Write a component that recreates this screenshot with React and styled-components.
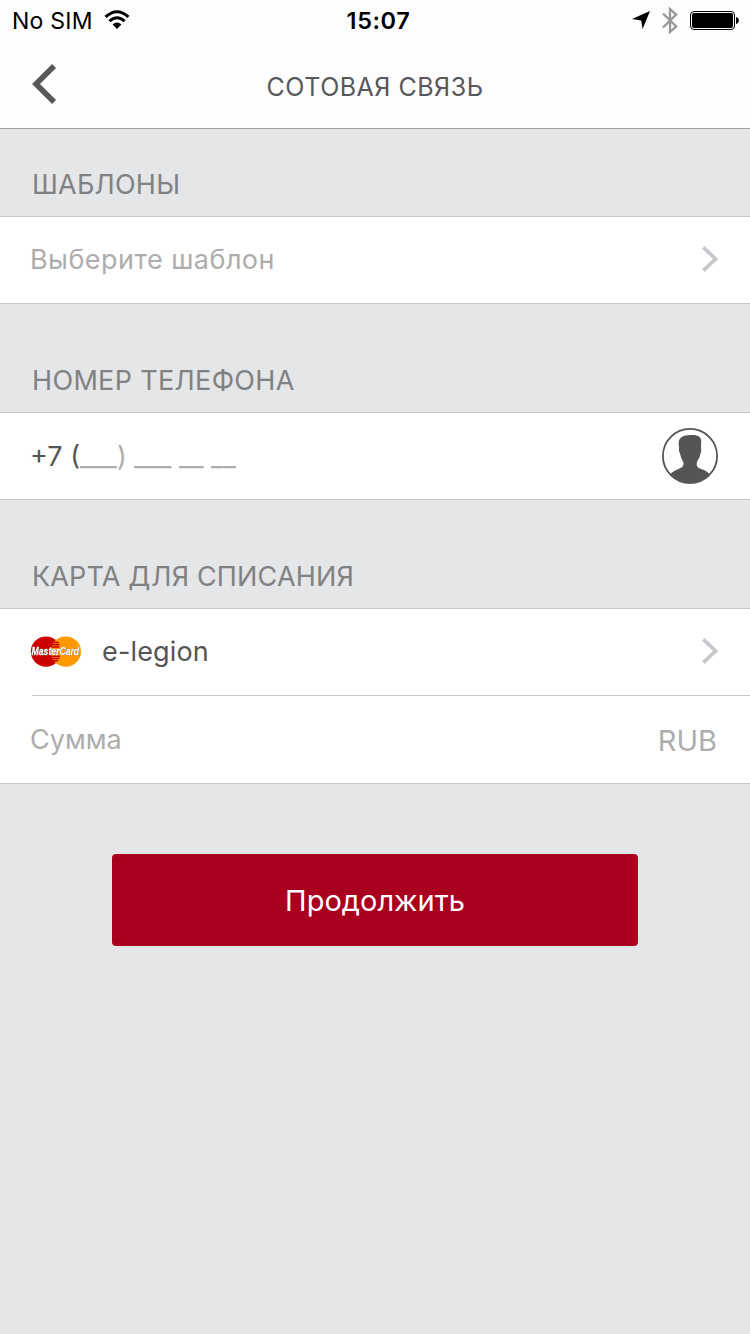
import React from "react";
import styled, { createGlobalStyle } from "styled-components";

const GlobalStyle = createGlobalStyle`
  * { box-sizing: border-box; }
  body { margin: 0; background: #e5e6e8; font-family: Inter, "Liberation Sans", sans-serif; }
  svg { display: block; flex: none; overflow: visible; }
`;

const Screen = styled.div`
  width: 750px;
  min-height: 1334px;
  background: #e5e6e8;
  display: flex;
  flex-direction: column;
`;

const Header = styled.header`
  height: 129px;
  background: #fdfdfd;
  border-bottom: 1px solid #a3a4a6;
`;

const StatusBar = styled.div`
  height: 40px;
  padding: 0 11px 0 12px;
  display: grid;
  grid-template-columns: 1fr auto 1fr;
  align-items: center;
  color: #000;
`;

const StatusGroup = styled.div`
  display: flex;
  align-items: center;
  justify-content: ${(p) => (p.$end ? "flex-end" : "flex-start")};
`;

const NavBar = styled.div`
  height: 88px;
  padding: 0 32px;
  display: grid;
  grid-template-columns: 1fr auto 1fr;
  align-items: center;
`;

const BackButton = styled.button`
  justify-self: start;
  padding: 0;
  margin-bottom: 1px;
  border: 0;
  background: none;
`;

const Text = styled.span`
  padding-top: ${(p) => p.$drop || 0}px;
  color: ${(p) => p.$color || "inherit"};
  font-size: ${(p) => p.$size || 27}px;
  font-weight: ${(p) => p.$weight || 390};
  letter-spacing: ${(p) => p.$track || 0}px;
  line-height: 32px;
  white-space: pre;
`;

const Clock = styled(Text)`
  padding-left: 6px;
`;

const Title = styled.h1`
  margin: 6px 0 0;
  font-size: 25px;
  font-weight: 390;
  letter-spacing: 0.5px;
  line-height: 40px;
  color: #58585a;
`;

const SectionLabel = styled.h2`
  margin: 0;
  height: ${(p) => (p.$first ? 87 : 108)}px;
  padding: 0 32px 11px;
  display: flex;
  align-items: flex-end;
  font-size: 27px;
  font-weight: 385;
  line-height: 40px;
  letter-spacing: ${(p) => p.$track || 0}px;
  color: #808183;
`;

const Group = styled.div`
  background: #fff;
  border-top: 1px solid #c8c7cc;
  border-bottom: 1px solid #c8c7cc;
`;

const Row = styled.div`
  height: ${(p) => p.$height || 86}px;
  padding: 0 ${(p) => p.$right || 32}px 0 30px;
  display: flex;
  align-items: center;
  justify-content: space-between;
`;

const Divider = styled.div`
  height: 1px;
  margin-left: 32px;
  background: #c8c7cc;
`;

const CardInfo = styled.div`
  display: flex;
  align-items: center;
  gap: 20px;
`;

const ContinueButton = styled.button`
  align-self: center;
  width: 526px;
  height: 92px;
  margin-top: 70px;
  padding: 2px 0 0;
  border: 0;
  border-radius: 4px;
  background: #aa001f;
  color: #fff;
  font-family: inherit;
`;

const LogoText = styled.text`
  font: italic 700 10.2px "Liberation Sans", sans-serif;
  fill: #fff;
  stroke: #fff;
  stroke-width: 0.3px;
  filter: drop-shadow(0.8px 0.8px 0.3px rgba(50, 10, 0, 0.85));
`;

const WifiIcon = () => (
  <svg width="26" height="20" viewBox="0 0 26 20" style={{ marginLeft: 11 }}>
    <g fill="none" stroke="#000" strokeWidth="2.9">
      <path d="M1.5 6.9 Q13 -3.4 24.5 6.9" />
      <path d="M5.4 11.2 Q13 4.4 20.6 11.2" />
    </g>
    <path d="M8.6 14.5 Q13 10.7 17.4 14.5 L13 19 Z" fill="#000" />
  </svg>
);

const LocationIcon = () => (
  <svg width="18" height="18" viewBox="0 0 18 18">
    <path d="M18 0 L10.6 18 L9.2 9.4 L0 7.9 Z" fill="#000" />
  </svg>
);

const BluetoothIcon = () => (
  <svg width="16" height="27" viewBox="0 0 16 27" style={{ marginLeft: 12 }}>
    <path d="M1 6.5 L14.2 19.4 L8 25 V2 L14.2 7.6 L1 20.5" fill="none" stroke="#989898" strokeWidth="2.3" />
  </svg>
);

const BatteryIcon = () => (
  <svg width="49" height="19" viewBox="0 0 49 19" style={{ marginLeft: 12 }}>
    <rect x=".5" y=".5" width="44" height="18" rx="3.5" fill="none" stroke="#000" />
    <rect x="2" y="2" width="41" height="15" rx="2" fill="#000" />
    <path d="M46 6 C49.8 6.6 49.8 12.4 46 13 Z" fill="#000" />
  </svg>
);

const Chevron = () => (
  <svg width="16" height="28" viewBox="0 0 16 28">
    <path d="M1.3 1.3 L13.6 13 L1.3 24.7" fill="none" stroke="#c7c7cc" strokeWidth="3.7" />
  </svg>
);

const BackIcon = () => (
  <svg width="24" height="40" viewBox="0 0 24 40">
    <path d="M22.1 1.9 L4 20 L22.1 38.1" fill="none" stroke="#58585a" strokeWidth="5.6" />
  </svg>
);

const ContactIcon = () => (
  <svg width="56" height="56" viewBox="0 0 56 56">
    <circle cx="28" cy="28" r="27.1" fill="#fff" stroke="#555" strokeWidth="1.8" />
    <path
      d="M28 7 C35 6.4 39.4 8 39.2 14 L39 20 C39.7 22 39 25 38.2 26.4 C38 30 35.2 32 34.7 35 C34.4 38.5 36 40 40 41.2 C43.5 42.6 46 44 47.6 46.2 A27 27 0 0 1 8.4 46.2 C10 44 12.5 42.6 16 41.2 C20 39.8 21.8 38.5 21.4 34.6 C20.3 31.5 18.7 30 18.3 26.4 C17 24 16.6 21.5 17.2 19.5 C16.2 13.5 15.8 7.6 28 7 Z"
      fill="#555"
    />
  </svg>
);

const MasterCardLogo = () => (
  <svg width="52" height="32" viewBox="0 0 52 32">
    <circle cx="16" cy="15.6" r="15.2" fill="#cc0000" />
    <circle cx="35.8" cy="15.6" r="15.2" fill="#ff9900" />
    <path d="M22 6.5h7M21 8.7h8.5M20.5 10.9h9M21 20.3h9M21.5 22.5h8M23 24.7h5" stroke="#cc0000" strokeWidth="1.5" />
    <LogoText x="1.6" y="19.2" textLength="47.5" lengthAdjust="spacingAndGlyphs">MasterCard</LogoText>
  </svg>
);

export default function App() {
  return (
    <>
      <GlobalStyle />
      <Screen>
        <Header>
          <StatusBar>
            <StatusGroup>
              <Text $size={23} $track={0.25} $drop={1}>No SIM</Text>
              <WifiIcon />
            </StatusGroup>
            <Clock $size={23.5} $weight={600} $track={0.6} $drop={1}>15:07</Clock>
            <StatusGroup $end>
              <LocationIcon />
              <BluetoothIcon />
              <BatteryIcon />
            </StatusGroup>
          </StatusBar>
          <NavBar>
            <BackButton aria-label="Назад"><BackIcon /></BackButton>
            <Title>СОТОВАЯ СВЯЗЬ</Title>
          </NavBar>
        </Header>

        <SectionLabel $first $track={0.22}>ШАБЛОНЫ</SectionLabel>
        <Group>
          <Row>
            <Text $color="#adadad" $track={0.44}>Выберите шаблон</Text>
            <Chevron />
          </Row>
        </Group>

        <SectionLabel $track={0.34}>НОМЕР ТЕЛЕФОНА</SectionLabel>
        <Group>
          <Row>
            <Text $color="#555" $drop={2}>+7 (<Text $color="#adadad">___) ___ __ __</Text></Text>
            <ContactIcon />
          </Row>
        </Group>

        <SectionLabel $track={0.16}>КАРТА ДЛЯ СПИСАНИЯ</SectionLabel>
        <Group>
          <Row>
            <CardInfo>
              <MasterCardLogo />
              <Text $color="#555" $track={0.15}>e-legion</Text>
            </CardInfo>
            <Chevron />
          </Row>
          <Divider />
          <Row $height={87} $right={33}>
            <Text $color="#adadad" $drop={1}>Сумма</Text>
            <Text $color="#adadad" $size={29} $drop={3}>RUB</Text>
          </Row>
        </Group>

        <ContinueButton>
          <Text $size={29}>Продолжить</Text>
        </ContinueButton>
      </Screen>
    </>
  );
}
